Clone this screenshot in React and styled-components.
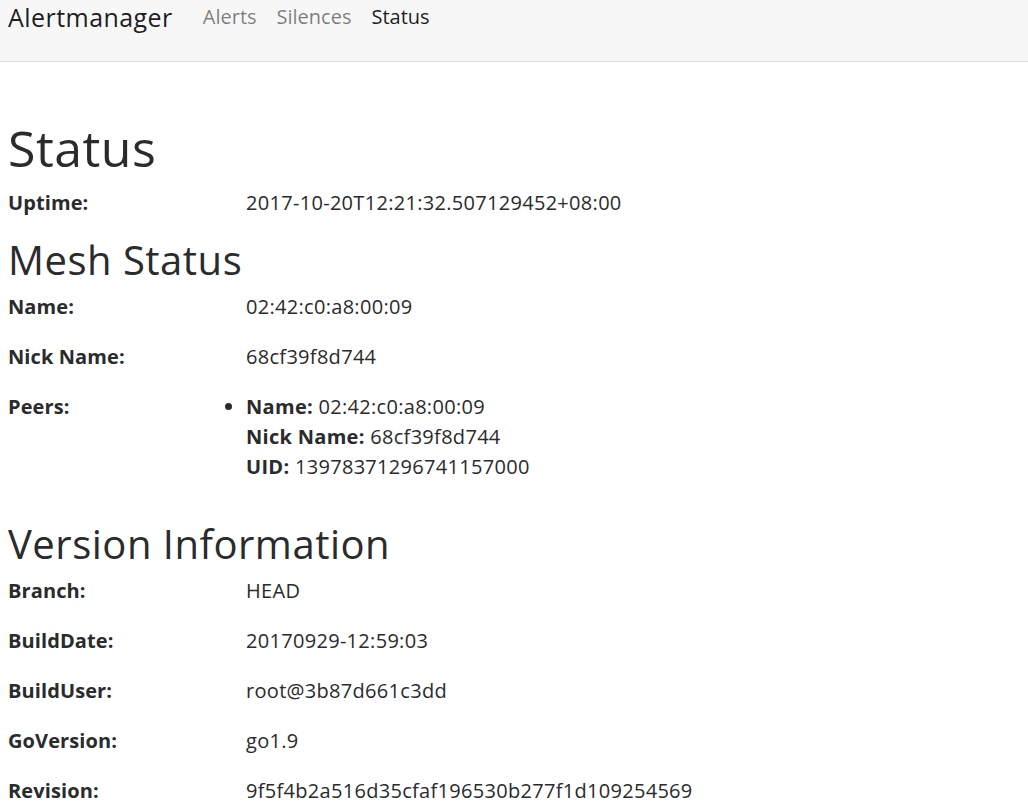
import React from "react";
import styled, { createGlobalStyle } from "styled-components";

const GlobalStyle = createGlobalStyle`
  html, body {
    margin: 0;
    padding: 0;
    background: #fff;
  }
  body {
    font-family: "Open Sans", "Noto Sans", "DejaVu Sans", sans-serif;
    font-size: 20px;
    line-height: 1.5;
    color: #292b2c;
  }
`;

const status = {
  uptime: "2017-10-20T12:21:32.507129452+08:00",
  mesh: {
    name: "02:42:c0:a8:00:09",
    nickName: "68cf39f8d744",
    peers: [
      {
        name: "02:42:c0:a8:00:09",
        nickName: "68cf39f8d744",
        uid: "13978371296741157000",
      },
    ],
  },
  version: [
    ["Branch", "HEAD"],
    ["BuildDate", "20170929-12:59:03"],
    ["BuildUser", "root@3b87d661c3dd"],
    ["GoVersion", "go1.9"],
    ["Revision", "9f5f4b2a516d35cfaf196530b277f1d109254569"],
  ],
};

const App = () => {
  return (
    <>
      <GlobalStyle />
      <Navbar>
        <Brand>Alertmanager</Brand>
        <NavList>
          <NavLink>Alerts</NavLink>
          <NavLink>Silences</NavLink>
          <NavLink active>Status</NavLink>
        </NavList>
      </Navbar>
      <Main>
        <Title>Status</Title>
        <Row>
          <Label>Uptime:</Label>
          <Value>{status.uptime}</Value>
        </Row>

        <SubTitle>Mesh Status</SubTitle>
        <Row>
          <Label>Name:</Label>
          <Value>{status.mesh.name}</Value>
        </Row>
        <Row>
          <Label>Nick Name:</Label>
          <Value>{status.mesh.nickName}</Value>
        </Row>
        <Row>
          <Label>Peers:</Label>
          <Value>
            <Peers>
              {status.mesh.peers.map((peer) => (
                <li key={peer.uid}>
                  <b>Name:</b> {peer.name}
                  <br />
                  <b>Nick Name:</b> {peer.nickName}
                  <br />
                  <b>UID:</b> {peer.uid}
                </li>
              ))}
            </Peers>
          </Value>
        </Row>

        <SubTitle>Version Information</SubTitle>
        {status.version.map(([key, val]) => (
          <Row key={key}>
            <Label>{key}:</Label>
            <Value>{val}</Value>
          </Row>
        ))}
      </Main>
    </>
  );
};

export default App;

const Navbar = styled.nav`
  display: flex;
  align-items: flex-start;
  height: 61px;
  padding: 0 8px;
  background-color: #f7f7f7;
  border-bottom: 1px solid #dcdcdc;
`;

const Brand = styled.a`
  font-size: 25px;
  line-height: 30px;
  padding-top: 2px;
  margin-right: 20px;
  color: rgba(0, 0, 0, 0.9);
  letter-spacing: 0.45px;
`;

const NavList = styled.div`
  display: flex;
`;

const NavLink = styled.a`
  font-size: 20px;
  line-height: 30px;
  padding: 2px 10px 0;
  color: ${(p) => (p.active ? "rgba(0, 0, 0, 0.9)" : "rgba(0, 0, 0, 0.5)")};
  cursor: pointer;
`;

const Main = styled.main`
  padding: 0 8px;
`;

const Title = styled.h1`
  font-size: 50px;
  font-weight: 400;
  line-height: 1.1;
  letter-spacing: 0.5px;
  margin: 59px 0 12px;
`;

const SubTitle = styled.h2`
  font-size: 40px;
  font-weight: 400;
  line-height: 1.1;
  letter-spacing: 0.5px;
  margin: 0 0 10px;
`;

const Row = styled.dl`
  display: grid;
  grid-template-columns: 238px 1fr;
  margin: 0 0 20px;
  letter-spacing: 0.3px;
`;

const Label = styled.dt`
  font-weight: 700;
  letter-spacing: 0.1px;
`;

const Value = styled.dd`
  margin: 0;
`;

const Peers = styled.ul`
  margin: 0 0 20px;
  padding-left: 0;
  list-style: disc outside;

  b {
    font-weight: 700;
  }
`;
